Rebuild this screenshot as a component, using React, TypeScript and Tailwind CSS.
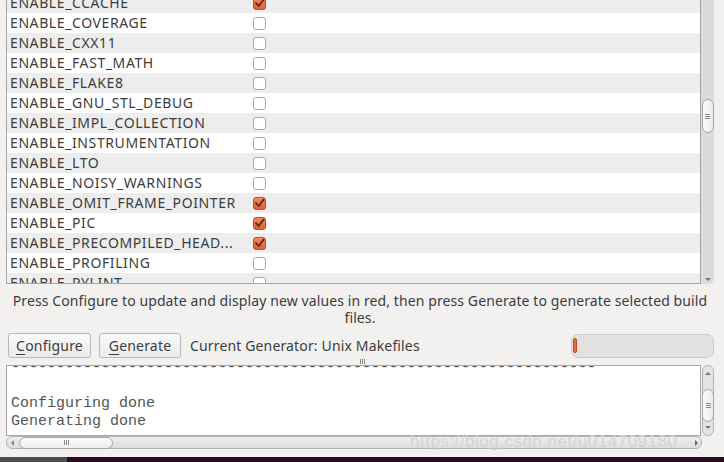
import React from 'react';

const rows: { name: string; on: boolean }[] = [
    { name: 'ENABLE_CCACHE', on: true },
    { name: 'ENABLE_COVERAGE', on: false },
    { name: 'ENABLE_CXX11', on: false },
    { name: 'ENABLE_FAST_MATH', on: false },
    { name: 'ENABLE_FLAKE8', on: false },
    { name: 'ENABLE_GNU_STL_DEBUG', on: false },
    { name: 'ENABLE_IMPL_COLLECTION', on: false },
    { name: 'ENABLE_INSTRUMENTATION', on: false },
    { name: 'ENABLE_LTO', on: false },
    { name: 'ENABLE_NOISY_WARNINGS', on: false },
    { name: 'ENABLE_OMIT_FRAME_POINTER', on: true },
    { name: 'ENABLE_PIC', on: true },
    { name: 'ENABLE_PRECOMPILED_HEAD...', on: true },
    { name: 'ENABLE_PROFILING', on: false },
    { name: 'ENABLE_PYLINT', on: false },
];

function CheckBox({ on }: { on: boolean }) {
    if (!on) {
        return <div className="w-[13px] h-[13px] rounded-[3px] border border-[#a9a9a9] bg-white" />;
    }
    return (
        <svg width="13" height="13" viewBox="0 0 13 13">
            <defs>
                <linearGradient id="cb" x1="0" y1="0" x2="0" y2="1">
                    <stop offset="0" stopColor="#f58b60" />
                    <stop offset="1" stopColor="#e05a2e" />
                </linearGradient>
            </defs>
            <rect x="0.5" y="0.5" width="12" height="12" rx="2.5" fill="url(#cb)" stroke="#b9532f" />
            <path d="M3 6.2 L5.6 9 L10.6 2.6" fill="none" stroke="#5b2716" strokeWidth="1.8" strokeLinecap="round" strokeLinejoin="round" />
        </svg>
    );
}

function Grip({ vertical }: { vertical?: boolean }) {
    return (
        <div className={vertical ? 'flex flex-col gap-[1px]' : 'flex gap-[1px]'}>
            <div className={vertical ? 'w-[5px] h-[1px] bg-[#8a8a8a]' : 'w-[1px] h-[5px] bg-[#8a8a8a]'} />
            <div className={vertical ? 'w-[5px] h-[1px] bg-[#8a8a8a]' : 'w-[1px] h-[5px] bg-[#8a8a8a]'} />
            <div className={vertical ? 'w-[5px] h-[1px] bg-[#8a8a8a]' : 'w-[1px] h-[5px] bg-[#8a8a8a]'} />
        </div>
    );
}

export default function App() {
    const sans = { fontFamily: '"Noto Sans", "DejaVu Sans", sans-serif' };
    return (
        <div className="w-[724px] h-[462px] bg-[#f2f1f0] relative overflow-hidden flex flex-col text-[#3c3c3c]" style={sans}>
            {/* cache list */}
            <div className="flex h-[284px] ml-[6px] mr-[10px]">
                <div className="flex-1 overflow-hidden border-l border-b border-[#a8a8a8] bg-white">
                    <div className="-mt-[7px]">
                        {rows.map((r, i) => (
                            <div key={r.name} className={`flex items-center h-5 ${i % 2 === 0 ? 'bg-[#ededed]' : 'bg-white'}`}>
                                <div className="w-[246px] pl-[3px] text-[14px] leading-5 tracking-[0.6px] whitespace-nowrap">{r.name}</div>
                                <CheckBox on={r.on} />
                            </div>
                        ))}
                    </div>
                </div>
                <div className="w-[14px] border-l border-[#a4a4a4] bg-[#dcdbda] rounded-br-[6px] flex flex-col items-center pt-[99px]">
                    <div className="w-[12px] h-[34px] rounded-full border border-[#a6a6a6] bg-gradient-to-r from-[#fbfbfb] to-[#ececec] flex items-center justify-center">
                        <Grip vertical />
                    </div>
                    <div className="flex-1" />
                    <div className="mb-[3px] w-0 h-0 border-l-[3px] border-r-[3px] border-t-[3px] border-l-transparent border-r-transparent border-t-[#777]" />
                </div>
            </div>

            {/* hint */}
            <p className="mx-[8px] mt-[8px] w-[704px] text-center text-[14px] leading-[17px] tracking-[0.1px] text-[#3c3c3c]">
                Press Configure to update and display new values in red, then press Generate to generate selected build files.
            </p>

            {/* buttons */}
            <div className="flex items-center mt-[7px] ml-[8px] mr-[10px] h-[25px]">
                <button className="h-[25px] w-[83px] rounded-[3px] border border-[#b8b8b8] bg-gradient-to-b from-[#fafafa] to-[#ebebeb] text-[14px] tracking-[0.2px] text-[#3c3c3c]">
                    <span className="underline underline-offset-[3px] decoration-1">C</span>onfigure
                </button>
                <button className="ml-[8px] h-[25px] w-[82px] rounded-[3px] border border-[#b8b8b8] bg-gradient-to-b from-[#fafafa] to-[#ebebeb] text-[14px] tracking-[0.2px] text-[#3c3c3c]">
                    <span className="underline underline-offset-[3px] decoration-1">G</span>enerate
                </button>
                <span className="ml-[9px] text-[14px] tracking-[0.15px]">Current Generator: Unix Makefiles</span>
                <div className="ml-auto w-[143px] h-[24px] rounded-[7px] border border-[#cbcbcb] bg-[#e3e2e1] flex items-center pl-[1px]">
                    <div className="w-[4px] h-[15px] rounded-[2px] bg-[#ea6a3e] border border-[#c24b22]" />
                </div>
            </div>

            {/* splitter */}
            <div className="h-[7px] flex justify-center items-center">
                <Grip />
            </div>

            {/* output */}
            <div className="flex ml-[6px] mr-[10px] h-[71px]">
                <div className="flex-1 overflow-hidden border border-[#a8a8a8] bg-white">
                    <div className="-mt-[7px] pl-[4px] text-[15px] leading-[18px] text-[#555] whitespace-pre" style={{ fontFamily: '"Liberation Mono", monospace' }}>
                        <div>{'-----------------------------------------------------------------'}</div>
                        <div>{' '}</div>
                        <div>Configuring done</div>
                        <div>Generating done</div>
                    </div>
                </div>
                <div className="ml-[1px] w-[12px] rounded-[6px] border border-[#b4b4b4] bg-[#e4e3e2] flex flex-col items-center">
                    <div className="mt-[6px] w-0 h-0 border-l-[3px] border-r-[3px] border-b-[3px] border-l-transparent border-r-transparent border-b-[#777]" />
                    <div className="mt-[14px] w-[12px] h-[33px] rounded-full border border-[#a6a6a6] bg-gradient-to-r from-[#fbfbfb] to-[#ececec] flex items-center justify-center">
                        <Grip vertical />
                    </div>
                    <div className="mt-[4px] w-0 h-0 border-l-[3px] border-r-[3px] border-t-[3px] border-l-transparent border-r-transparent border-t-[#777]" />
                </div>
            </div>

            {/* horizontal scrollbar */}
            <div className="ml-[6px] mr-[22px] h-[13px] rounded-[6px] border border-[#b4b4b4] bg-gradient-to-b from-[#eeeeee] to-[#dedede] flex items-center">
                <div className="ml-[4px] w-0 h-0 border-t-[3px] border-b-[3px] border-r-[3px] border-t-transparent border-b-transparent border-r-[#888]" />
                <div className="ml-[5px] w-[94px] h-[12px] rounded-full border border-[#a6a6a6] bg-gradient-to-b from-[#fbfbfb] to-[#ececec] flex items-center justify-center">
                    <Grip />
                </div>
                <div className="flex-1" />
                <div className="mr-[3px] w-0 h-0 border-t-[3px] border-b-[3px] border-l-[3px] border-t-transparent border-b-transparent border-l-[#666]" />
            </div>

            <div className="flex-1" />
            <div className="h-[5px] flex">
                <div className="w-[67px] bg-[#4e4e4e]" />
                <div className="flex-1 bg-[#2a0c20]" />
            </div>

            {/* watermark */}
            <span className="absolute left-[410px] top-[429px] text-[17px] text-[#d4d4d4] tracking-[0.5px]" style={{ fontFamily: '"Liberation Sans", sans-serif' }}>
                https://blog.csdn.net/u014709180
            </span>
        </div>
    );
}
